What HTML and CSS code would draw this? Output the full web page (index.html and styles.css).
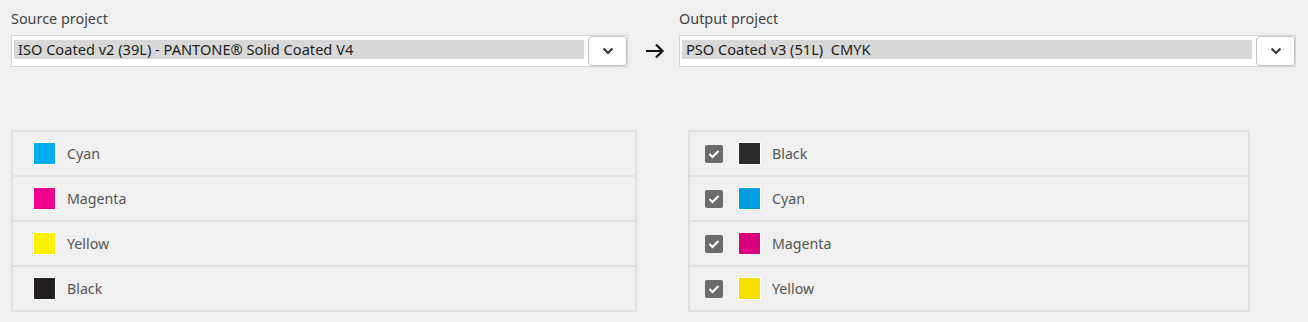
FILE: index.html
```html
<!DOCTYPE html>
<html lang="en">
<head>
    <meta charset="UTF-8">
    <title>Project conversion</title>
    <link rel="stylesheet" href="styles.css">
</head>
<body>
    <div class="projects">
        <div class="project">
            <div class="project-label">Source project</div>
            <div class="picker">
                <div class="picker-field"><span class="picker-value">ISO Coated v2 (39L) - PANTONE® Solid Coated V4</span></div>
                <div class="picker-button">
                    <svg width="12" height="8" viewBox="0 0 12 8"><path d="M1.5 1.5 L6 6 L10.5 1.5" fill="none" stroke="#333" stroke-width="2"/></svg>
                </div>
            </div>
        </div>
        <div class="project-arrow">
            <svg width="20" height="16" viewBox="0 0 20 16"><path d="M1 8 H18 M11 1.5 L17.5 8 L11 14.5" fill="none" stroke="#111" stroke-width="2.2"/></svg>
        </div>
        <div class="project">
            <div class="project-label">Output project</div>
            <div class="picker">
                <div class="picker-field"><span class="picker-value">PSO Coated v3 (51L)&nbsp; CMYK</span></div>
                <div class="picker-button">
                    <svg width="12" height="8" viewBox="0 0 12 8"><path d="M1.5 1.5 L6 6 L10.5 1.5" fill="none" stroke="#333" stroke-width="2"/></svg>
                </div>
            </div>
        </div>
    </div>

    <div class="lists">
        <div class="ink-list source-list">
            <div class="ink-row"><span class="swatch" style="background:#00aeef"></span><span class="ink-name">Cyan</span></div>
            <div class="ink-row"><span class="swatch" style="background:#ec008c"></span><span class="ink-name">Magenta</span></div>
            <div class="ink-row"><span class="swatch" style="background:#fff200"></span><span class="ink-name">Yellow</span></div>
            <div class="ink-row"><span class="swatch" style="background:#231f20"></span><span class="ink-name">Black</span></div>
        </div>
        <div class="ink-list output-list">
            <div class="ink-row">
                <span class="check"><svg width="12" height="10" viewBox="0 0 12 10"><path d="M1.5 5 L4.5 8 L10.5 2" fill="none" stroke="#fff" stroke-width="2"/></svg></span>
                <span class="swatch" style="background:#2b2b2d"></span><span class="ink-name">Black</span>
            </div>
            <div class="ink-row">
                <span class="check"><svg width="12" height="10" viewBox="0 0 12 10"><path d="M1.5 5 L4.5 8 L10.5 2" fill="none" stroke="#fff" stroke-width="2"/></svg></span>
                <span class="swatch" style="background:#009fe3"></span><span class="ink-name">Cyan</span>
            </div>
            <div class="ink-row">
                <span class="check"><svg width="12" height="10" viewBox="0 0 12 10"><path d="M1.5 5 L4.5 8 L10.5 2" fill="none" stroke="#fff" stroke-width="2"/></svg></span>
                <span class="swatch" style="background:#d9007e"></span><span class="ink-name">Magenta</span>
            </div>
            <div class="ink-row">
                <span class="check"><svg width="12" height="10" viewBox="0 0 12 10"><path d="M1.5 5 L4.5 8 L10.5 2" fill="none" stroke="#fff" stroke-width="2"/></svg></span>
                <span class="swatch" style="background:#f7e000"></span><span class="ink-name">Yellow</span>
            </div>
        </div>
    </div>
</body>
</html>
```

FILE: styles.css
```css
body {
    margin: 0;
    padding: 9px 0 0 11px;
    background: #f0f0f0;
    font-family: 'Noto Sans', 'Open Sans', sans-serif;
    font-size: 14px;
    color: #333;
}

/* Project pickers */
.projects {
    display: flex;
    align-items: flex-start;
}

.project {
    width: 617px;
}

.project-label {
    color: #444;
    font-size: 14.4px;
    line-height: 20px;
    margin-bottom: 6px;
}

.picker {
    display: flex;
    height: 30px;
    border: 1px solid #d4d4d4;
    background: #fff;
}

.picker-field {
    flex: 1;
    padding: 4px 3px 5px 2px;
}

.picker-value {
    display: block;
    height: 19px;
    line-height: 19px;
    background: #d8d8d8;
    padding-left: 4px;
    color: #1e1e1e;
    font-size: 14.6px;
    white-space: nowrap;
    overflow: hidden;
}

.picker-button {
    width: 37px;
    border: 1px solid #c6c6c6;
    border-radius: 4px;
    background: #fff;
    display: flex;
    justify-content: center;
    align-items: center;
    margin: 0 0 0 1px;
}

.project-arrow {
    width: 51px;
    display: flex;
    justify-content: center;
    padding: 34px 0 0 2px;
    box-sizing: border-box;
}

/* Ink lists */
.lists {
    display: flex;
    gap: 51px;
    margin-top: 63px;
}

.ink-list {
    border: 2px solid #e2e2e2;
    border-radius: 2px;
}

.source-list {
    width: 622px;
}

.output-list {
    width: 558px;
}

.ink-row {
    display: flex;
    align-items: center;
    height: 43px;
    border-top: 2px solid #e2e2e2;
}

.ink-row:first-child {
    border-top: none;
}

.source-list .ink-row {
    padding-left: 20px;
}

.output-list .ink-row {
    padding-left: 15px;
}

.check {
    width: 18px;
    height: 18px;
    border-radius: 2px;
    background: #6b6b6b;
    display: flex;
    justify-content: center;
    align-items: center;
    margin-right: 15px;
}

.swatch {
    width: 21px;
    height: 21px;
    border: 1px solid #fff;
    margin-right: 11px;
}

.ink-name {
    color: #555;
    font-size: 14.2px;
}
```
